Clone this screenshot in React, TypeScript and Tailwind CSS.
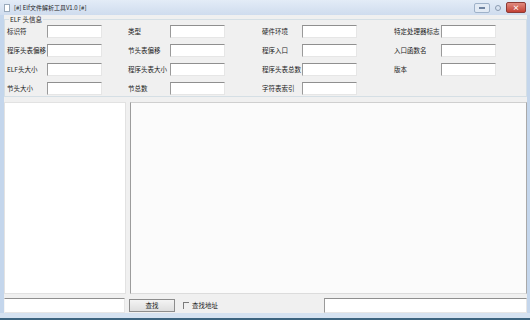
import React from "react";

const FONT = { fontFamily: '"Noto Sans CJK SC", "Liberation Sans", sans-serif' };

// four columns of the header group, top to bottom
const COLS: { w: string; lw: string; fields: (string | null)[] }[] = [
  { w: "w-[121px]", lw: "w-[40px]", fields: ["标识符", "程序头表偏移", "ELF头大小", "节头大小"] },
  { w: "w-[134px]", lw: "w-[42px]", fields: ["类型", "节头表偏移", "程序头表大小", "节总数"] },
  { w: "w-[132px]", lw: "w-[40px]", fields: ["硬件环境", "程序入口", "程序头表总数", "字符表索引"] },
  { w: "w-[120px]", lw: "w-[47px]", fields: ["特定处理器标志", "入口函数名", "版本", null] },
];

function Edit({ className = "" }: { className?: string }) {
  return (
    <div
      className={`bg-white border border-t-[#8f8f8f] border-l-[#9a9a9a] border-r-[#e6e6e6] border-b-[#e6e6e6] ${className}`}
    />
  );
}

export default function App() {
  return (
    <div
      className="w-[530px] h-[320px] flex flex-col bg-[#c4d6ec] text-[#1b1b1b] overflow-hidden"
      style={FONT}
    >
      {/* ── Title bar ─────────────────────────────────────────── */}
      <div className="h-[15px] flex items-center bg-gradient-to-b from-[#e3ecf7] to-[#cfdcee] pl-[4px] pr-[4px]">
        <div className="w-[6px] h-[8px] bg-white border border-[#9aaabb] mr-[4px]" />
        <span className="text-[6px] leading-none">[#] Elf文件解析工具V1.0 [#]</span>
        <div className="ml-auto flex items-center gap-[3px]">
          <div className="w-[16px] h-[10px] rounded-[2px] border border-[#9fb2c9] bg-[#e2eaf4] flex items-center justify-center">
            <div className="w-[6px] h-[2px] bg-[#6f83a0]" />
          </div>
          <div className="w-[10px] h-[10px] flex items-center justify-center">
            <div className="w-[6px] h-[6px] rounded-full border border-[#8b9bb0]" />
          </div>
          <div className="w-[20px] h-[11px] rounded-[2px] bg-gradient-to-b from-[#e08a80] to-[#c33f34] border border-[#8c3b36] flex items-center justify-center text-white text-[7px] leading-none font-bold">
            ×
          </div>
        </div>
      </div>

      {/* ── Client area ───────────────────────────────────────── */}
      <div className="flex-1 mx-[4px] mr-[3px] bg-[#f0f0f0] flex flex-col">
        {/* group box */}
        <div className="relative mt-[4px] h-[78px] border border-[#d5dfe5]">
          <span className="absolute left-[4px] -top-[4px] bg-[#f0f0f0] px-[1px] text-[6.5px] leading-none">
            ELF 头信息
          </span>
          <div className="flex pl-[2px] pt-[5px]">
            {COLS.map((c, i) => (
              <div key={i} className={`${c.w} flex flex-col gap-[6px]`}>
                {c.fields.map((f, j) => (
                  <div key={j} className="h-[13px] flex items-center">
                    {f && (
                      <>
                        <span className={`${c.lw} text-[6.5px] leading-none whitespace-nowrap`}>{f}</span>
                        <Edit className="w-[55px] h-[13px]" />
                      </>
                    )}
                  </div>
                ))}
              </div>
            ))}
          </div>
        </div>

        {/* panels */}
        <div className="flex gap-[4px] mt-[5px] h-[192px]">
          <div className="w-[122px] bg-white border border-[#e2e2e2]" />
          <div className="flex-1 bg-[#fbfbfb] border border-t-[#cfcfcf] border-l-[#9c9c9c] border-r-[#a9a9a9] border-b-[#dcdcdc]" />
        </div>

        {/* bottom row */}
        <div className="flex items-center mt-[4px] h-[15px]">
          <Edit className="w-[121px] h-[15px] border-t-[#7d7d7d] border-l-[#f5f5f5]" />
          <div className="ml-[4px] w-[46px] h-[13px] border border-[#8d8d8d] bg-gradient-to-b from-[#f4f4f4] to-[#dedede] flex items-center justify-center text-[6.5px] leading-none">
            查找
          </div>
          <div className="ml-[8px] w-[6px] h-[7px] border-t border-l border-[#7a7a7a]" />
          <span className="ml-[3px] text-[6.5px] leading-none">查找地址</span>
          <Edit className="ml-auto w-[203px] h-[15px]" />
        </div>
        <div className="flex-1" />
      </div>

      {/* bottom frame */}
      <div className="h-[5px] bg-[#d5e2f1]" />
      <div className="h-[2px] bg-[#3c6480]" />
    </div>
  );
}
